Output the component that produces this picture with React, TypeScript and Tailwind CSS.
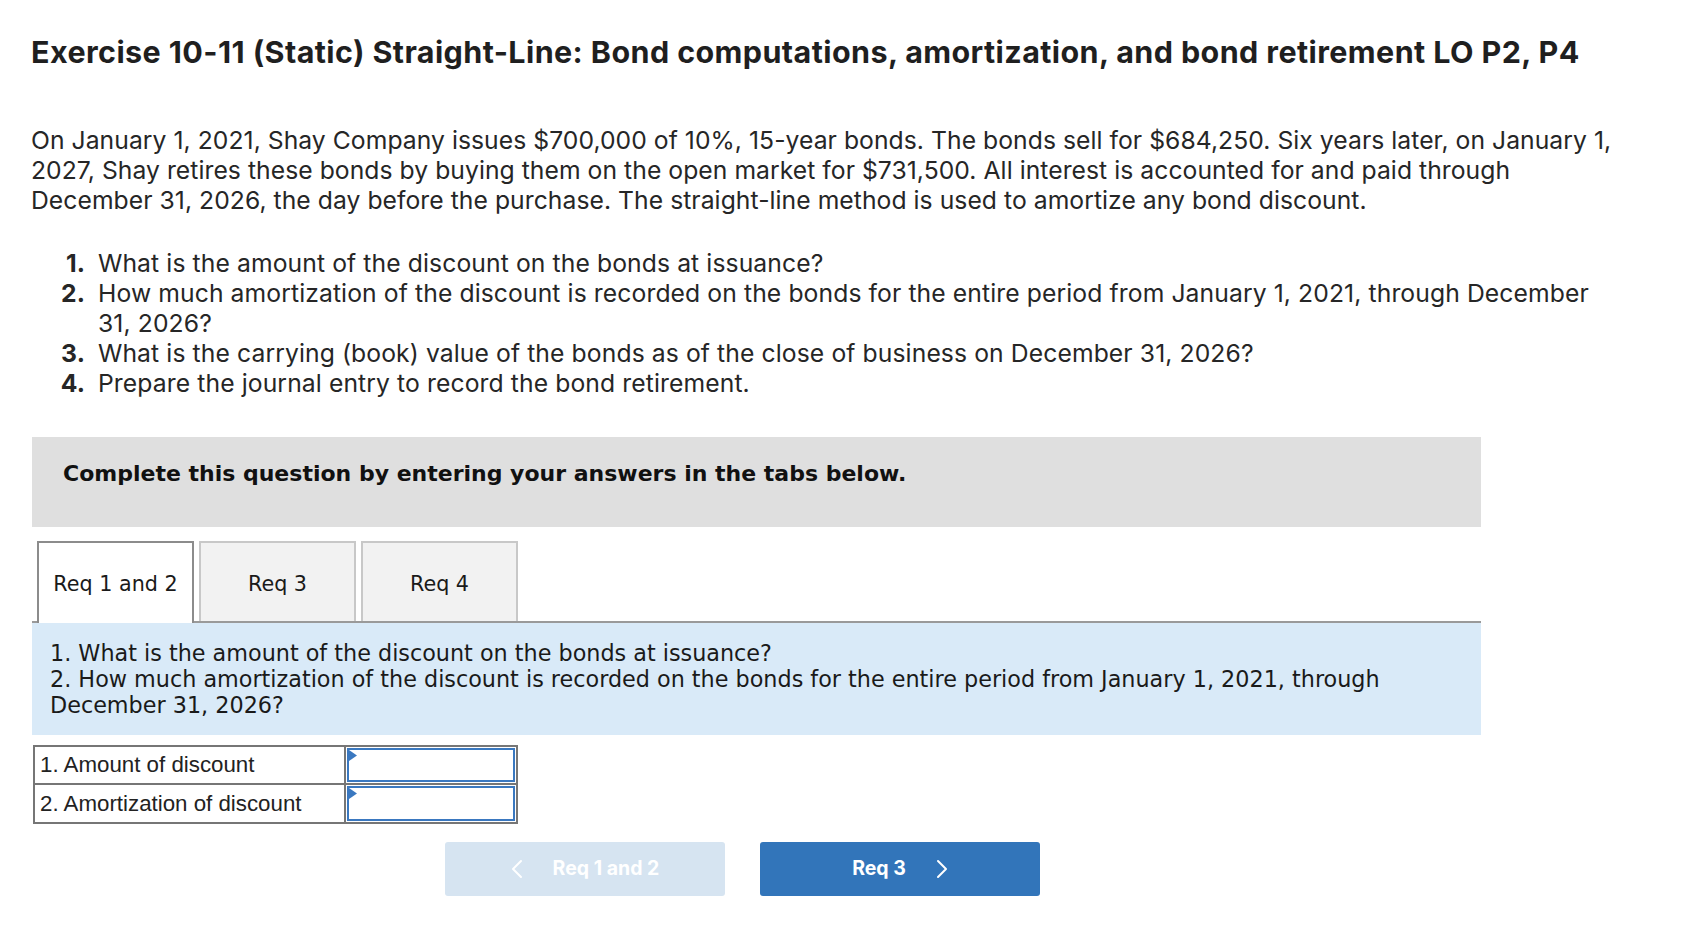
import React from "react";

const sans = { fontFamily: "Inter, 'Open Sans', sans-serif" };

function ChevronLeft() {
  return (
    <svg width="12" height="20" viewBox="0 0 12 20" fill="none">
      <path d="M10 2 L2 10 L10 18" stroke="white" strokeWidth="2" strokeLinecap="round" strokeLinejoin="round" />
    </svg>
  );
}
function ChevronRight() {
  return (
    <svg width="12" height="20" viewBox="0 0 12 20" fill="none">
      <path d="M2 2 L10 10 L2 18" stroke="white" strokeWidth="2" strokeLinecap="round" strokeLinejoin="round" />
    </svg>
  );
}

function InputCell() {
  return (
    <div className="relative h-full w-full p-[1px]">
      <div className="h-full w-full border-2 border-[#3a78c0] bg-white" />
      <svg className="absolute left-[3px] top-[3px]" width="8" height="11" viewBox="0 0 8 11">
        <polygon points="0,0 8,5.5 0,11" fill="#3a78c0" />
      </svg>
    </div>
  );
}

export default function App() {
  const items = [
    "What is the amount of the discount on the bonds at issuance?",
    "How much amortization of the discount is recorded on the bonds for the entire period from January 1, 2021, through December 31, 2026?",
    "What is the carrying (book) value of the bonds as of the close of business on December 31, 2026?",
    "Prepare the journal entry to record the bond retirement.",
  ];
  return (
    <div className="w-[1683px] h-[936px] overflow-hidden bg-white pl-[31px] pt-[34px] text-[#262626]" style={sans}>
      <h1 className="text-[30.5px] leading-[36px] font-bold tracking-[0.4px] text-[#1f1f1f]">
        Exercise 10-11 (Static) Straight-Line: Bond computations, amortization, and bond retirement LO P2, P4
      </h1>
      <p className="mt-[55px] w-[1594px] text-[24.7px] leading-[30px] tracking-[0.05px]">
        On January 1, 2021, Shay Company issues $700,000 of 10%, 15-year bonds. The bonds sell for $684,250. Six years later, on January 1, 2027, Shay retires these bonds by buying them on the open market for $731,500. All interest is accounted for and paid through December 31, 2026, the day before the purchase. The straight-line method is used to amortize any bond discount.
      </p>
      <ol className="mt-[33px] w-[1574px] text-[24.7px] leading-[30px] tracking-[0.1px]">
        {items.map((t, i) => (
          <li key={i} className="flex">
            <span className="w-[54px] shrink-0 text-right font-bold">{i + 1}.</span>
            <span className="ml-[13px]">{t}</span>
          </li>
        ))}
      </ol>

      <div className="ml-[1px] w-[1449px]" style={{ fontFamily: "'DejaVu Sans', Verdana, sans-serif" }}>
        <div className="mt-[39px] h-[90px] bg-[#dfdfdf] pl-[31px] pt-[24px]">
          <div className="text-[22px] leading-[26px] font-bold text-[#111]">
            Complete this question by entering your answers in the tabs below.
          </div>
        </div>

        <div className="mt-[14px] flex items-end gap-[5px] border-b-2 border-[#9a9a9a] pl-[5px]">
          <div className="relative z-10 -mb-[2px] flex h-[82px] w-[157px] items-center justify-center border-2 border-b-0 border-[#8c8c8c] bg-white pt-[4px] text-[20.7px] text-[#1a1a1a]">
            Req 1 and 2
          </div>
          <div className="flex h-[80px] w-[157px] items-center justify-center border-2 border-b-0 border-[#c8c8c8] bg-[#f2f2f2] pt-[6px] text-[20.7px] text-[#1a1a1a]">
            Req 3
          </div>
          <div className="flex h-[80px] w-[157px] items-center justify-center border-2 border-b-0 border-[#c8c8c8] bg-[#f2f2f2] pt-[6px] text-[20.7px] text-[#1a1a1a]">
            Req 4
          </div>
        </div>

        <div className="bg-[#d9eaf8] px-[18px] pt-[17px] pb-[17px] text-[22.3px] leading-[26px] text-[#1a1a1a]">
          <div>1. What is the amount of the discount on the bonds at issuance?</div>
          <div>2. How much amortization of the discount is recorded on the bonds for the entire period from January 1, 2021, through December 31, 2026?</div>
        </div>
      </div>

      <div className="ml-[2px] mt-[10px] w-[485px] border-2 border-[#767676]" style={{ fontFamily: "'Liberation Sans', Arial, sans-serif" }}>
        <div className="flex h-[38px] border-b-2 border-[#767676]">
          <div className="flex w-[311px] items-center border-r-2 border-[#767676] pl-[5px] text-[22.3px] text-[#222]">1. Amount of discount</div>
          <div className="flex-1"><InputCell /></div>
        </div>
        <div className="flex h-[37px]">
          <div className="flex w-[311px] items-center border-r-2 border-[#767676] pl-[5px] text-[22.3px] text-[#222]">2. Amortization of discount</div>
          <div className="flex-1"><InputCell /></div>
        </div>
      </div>

      <div className="mt-[18px] ml-[414px] flex gap-[35px]">
        <button className="flex h-[54px] w-[280px] items-center justify-center gap-[30px] rounded-[3px] bg-[#d6e4f1] text-[19.5px] font-bold text-white">
          <ChevronLeft />
          <span>Req 1 and 2</span>
        </button>
        <button className="flex h-[54px] w-[280px] items-center justify-center gap-[30px] rounded-[3px] bg-[#3275ba] text-[19.5px] font-bold text-white">
          <span>Req 3</span>
          <ChevronRight />
        </button>
      </div>
    </div>
  );
}
